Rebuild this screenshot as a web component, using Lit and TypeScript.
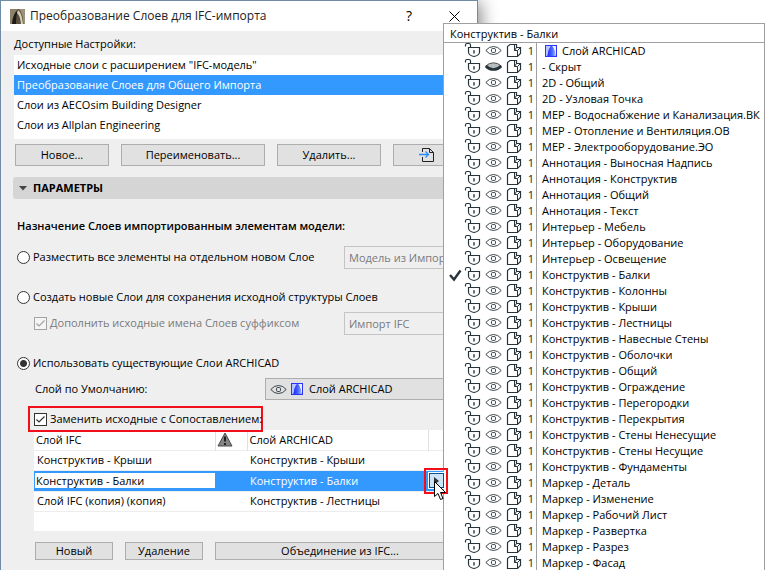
import { LitElement, html, css, svg, nothing } from "lit";
import { customElement, property, state } from "lit/decorators.js";
import { classMap } from "lit/directives/class-map.js";

const lockIcon = svg`<path d="M1.5 3.5V2Q1.5 .5 3 .5H5Q6.5 .5 6.5 2V4.5" /><path d="M4.5 4.5H15.5V9.5Q15 12.5 10 13.5Q5 12.5 4.5 9.5Z" /><path d="M10 7.2V10.4" stroke-width="1.4" />`;
const eyeIcon = svg`<path d="M.8 7.5Q4 3.5 8.5 3.5T16.2 7.5Q13 11.5 8.5 11.5T.8 7.5Z" stroke-width=".9" /><rect x="6.5" y="5.5" width="4" height="4" rx="1.2" stroke-width=".9" />`;
const eyeClosedIcon = svg`<path d="M.8 7Q4 3.8 8.5 3.8T16.2 7Q13 10.5 8.5 10.5T.8 7Z" fill="#b9bcbe" stroke-width=".8" /><path d="M.8 7Q4 10.5 8.5 10.5T16.2 7" stroke-width="2.6" />`;
const boxIcon = svg`<path d="M1.5 13.5V3.5L4 1.5H10.5V4.5H14.5V10.5L11.5 13.5Z" /><path d="M8.5 2V7.5H11.5V13.5M8.5 7.5L10.5 4.5M11.5 7.5L14 5" stroke-width="1" />`;

const LAYERS = [
  "Слой ARCHICAD", "- Скрыт", "2D - Общий", "2D - Узловая Точка",
  "МЕР - Водоснабжение и Канализация.ВК", "МЕР - Отопление и Вентиляция.ОВ", "МЕР - Электрооборудование.ЭО",
  "Аннотация - Выносная Надпись", "Аннотация - Конструктив", "Аннотация - Общий", "Аннотация - Текст",
  "Интерьер - Мебель", "Интерьер - Оборудование", "Интерьер - Освещение",
  "Конструктив - Балки", "Конструктив - Колонны", "Конструктив - Крыши", "Конструктив - Лестницы",
  "Конструктив - Навесные Стены", "Конструктив - Оболочки", "Конструктив - Общий", "Конструктив - Ограждение",
  "Конструктив - Перегородки", "Конструктив - Перекрытия", "Конструктив - Стены Ненесущие",
  "Конструктив - Стены Несущие", "Конструктив - Фундаменты",
  "Маркер - Деталь", "Маркер - Изменение", "Маркер - Рабочий Лист", "Маркер - Развертка", "Маркер - Разрез", "Маркер - Фасад",
];

const PRESETS = [
  'Исходные слои с расширением "IFC-модель"',
  "Преобразование Слоев для Общего Импорта",
  "Слои из AECOsim Building Designer",
  "Слои из Allplan Engineering",
];

@customElement("layer-logo")
export class LayerLogo extends LitElement {
  static styles = css`
    :host { display: block; width: 12px; height: 12px; }
    svg { display: block; }
  `;
  render() {
    return html`<svg width="12" height="12" viewBox="0 0 12 12" aria-hidden="true">
      <defs><linearGradient id="g" x2="1"><stop offset="0" stop-color="#1f2bff" /><stop offset=".6" stop-color="#4d6cff" /><stop offset="1" stop-color="#a9c0ff" /></linearGradient></defs>
      <rect width="12" height="12" fill="#2a35f5" />
      <path d="M1 11V1H6Q3.5 4 2.5 11Z" fill="#b8c4ff" />
      <path d="M7 1H11V11H10.5Q9.5 4 7 1Z" fill="#e6ecff" />
      <path d="M2.5 11Q3.5 3 6.5 1Q9.5 4 10.5 11Z" fill="url(#g)" />
    </svg>`;
  }
}

@customElement("layer-popup")
export class LayerPopup extends LitElement {
  @property() selected = "";
  static styles = css`
    :host { display: block; background: #fff; border: 1px solid #a0a0a3; border-bottom: 0; color: #000; font-size: 11px; line-height: 16px; box-sizing: border-box; }
    .title { padding: 2px 6px 0; height: 16px; border-bottom: 1px solid #a0a0a3; }
    ul { list-style: none; margin: 0; padding: 0; }
    li { display: grid; grid-template-columns: 20px 21px 21px 19px 11px 1fr; height: 16px; white-space: nowrap; cursor: default; }
    svg { display: block; fill: none; stroke: #27343c; stroke-width: 1.2; overflow: visible; }
    .check { stroke-width: 2.4; }
    .num { color: #10281c; text-align: right; padding-right: 2px; }
    .name { border-left: 1px solid #a0a0a3; padding-left: 5px; display: flex; align-items: center; gap: 5px; }
    .name layer-logo { margin-left: 3px; }
  `;
  render() {
    return html`<div class="title">${this.selected}</div>
      <ul role="listbox" aria-label="Слой">
        ${LAYERS.map((name, i) => html`<li role="option" aria-selected=${name === this.selected}>
          <span>${name === this.selected ? html`<svg class="check" width="20" height="16"><path d="M6 8L10 12.5L16.5 3.5" /></svg>` : nothing}</span>
          <svg width="17" height="16">${lockIcon}</svg>
          <svg width="17" height="16">${i === 1 ? eyeClosedIcon : eyeIcon}</svg>
          <svg width="17" height="16">${boxIcon}</svg>
          <span class="num">1</span>
          <span class="name">${i === 0 ? html`<layer-logo></layer-logo>` : nothing}${name}</span>
        </li>`)}
      </ul>`;
  }
}

@customElement("app-root")
export class AppRoot extends LitElement {
  @state() preset = 1;

  static styles = css`
    :host { display: block; position: relative; height: 100vh; overflow: hidden; background: #fff; font: 11px/16px "Open Sans", "Noto Sans", sans-serif; color: #000; }
    * { box-sizing: border-box; }
    button, input, select { font: inherit; color: inherit; margin: 0; }
    .dialog { width: calc(100% - 287px); min-height: 100%; background: #efefef; border: 1px solid #6e8ba8; border-bottom: 0; box-shadow: 3px 2px 16px #0007; }
    .titlebar { display: flex; align-items: center; height: 30px; padding: 0 13px 0 9px; background: #fff; gap: 5px; }
    .titlebar h1 { flex: 1; margin: 0; font-size: 12px; font-weight: 400; color: #222; }
    .titlebar button { width: 20px; height: 24px; padding: 0; border: 0; background: none; display: grid; place-items: center; font-size: 14px; }
    .titlebar .close { margin-left: 20px; }
    .body { padding: 5px 12px 0 12px; }
    .caption { padding-left: 1px; height: 19px; }
    .presets { list-style: none; margin: 0 0 0 1px; padding: 0 0 4px; background: #fff; }
    .presets li { height: 20px; line-height: 20px; padding-left: 3px; }
    .presets .on { background: #3399ff; color: #fff; }
    .row { display: flex; gap: 12px; }
    .btn { height: 22px; padding: 0; border: 1px solid #adadad; background: #e1e1e1; display: grid; place-items: center; }
    .actions { margin: 5px 0 11px 2px; }
    .w94 { width: 94px; } .w144 { width: 144px; } .w104 { width: 104px; } .w78 { width: 78px; } .w68 { width: 68px; }
    .grow { flex: 1; }
    .section { display: flex; align-items: center; gap: 6px; height: 22px; margin: 0; padding-left: 6px; font-size: 11px; font-weight: 700; background: #d5d5d5; border-radius: 3px; }
    .params { padding: 18px 0 0 4px; }
    .params h3 { margin: 0; font-size: 11px; font-weight: 600; line-height: 18px; }
    .line { display: grid; grid-template-columns: 327px 1fr; align-items: center; height: 24px; }
    .line.wide { grid-template-columns: 1fr; }
    .line label, .mark { display: flex; align-items: center; gap: 3px; white-space: nowrap; }
    .line .sub { padding-left: 17px; }
    .off { color: #7a7a7a; }
    .l1 { margin-top: 10px; } .l2 { margin-top: 16px; } .l3 { margin-top: 2px; } .l4 { margin-top: 16px; }
    input[type="radio"], input[type="checkbox"] { appearance: none; flex: none; width: 13px; height: 13px; background: #fff; border: 1px solid #333; }
    input[type="radio"] { border-radius: 50%; }
    input[type="radio"]:checked { background: radial-gradient(circle, #333 0 3px, #fff 4px); }
    input[type="checkbox"]:checked { background: #fff url('data:image/svg+xml,<svg xmlns="http://www.w3.org/2000/svg" viewBox="0 0 11 11"><path d="M1.5 5.5L4 8L9.5 2.5" fill="none" stroke="%23333" stroke-width="1.2"/></svg>'); }
    input[type="checkbox"]:disabled { opacity: .4; }
    .field { width: 100%; height: 23px; padding: 0 4px; border: 1px solid #c4c4c4; background: #efefef; color: #7a7a7a; border-radius: 0; }
    .default { display: grid; grid-template-columns: 230px 1fr; align-items: center; height: 22px; margin: 3px 0 6px 18px; }
    .pick { position: relative; }
    .pick select { width: 100%; height: 22px; appearance: none; padding: 0 0 0 43px; border: 1px solid #adadad; background: #e1e1e1; border-radius: 0; }
    .pick .icons { position: absolute; left: 5px; top: 4px; display: flex; gap: 4px; align-items: center; pointer-events: none; }
    .pick svg { fill: none; stroke: #27343c; }
    .mark { width: 235px; height: 26px; margin-left: 11px; padding-left: 4px; border: 2px solid #f0101a; position: relative; z-index: 1; }
    .map { width: calc(100% - 17px); margin: -2px 0 0 17px; table-layout: fixed; border-collapse: collapse; background: #fff; }
    .map th, .map td { height: 20px; padding: 0 0 0 3px; font-weight: 400; text-align: left; white-space: nowrap; border-top: 1px solid #ededed; }
    .map th { border: 0; border-right: 1px solid #e0e0e0; padding-left: 2px; }
    .map .cur td { background: #3399ff; color: #fff; }
    .map .cur input { display: block; width: 100%; height: 15px; border: 0; padding: 0 1px; background: #fff; color: #000; }
    .map .cur .edit { padding: 0 0 0 1px; }
    .map .c1 { width: 181px; } .map .c2 { width: 32px; } .map .c3 { width: 181px; }
    .map .warn { padding: 0 12px 0 0; } .map .warn svg { display: block; margin: auto; }
    .map .go { padding: 0; }
    .spot { position: relative; z-index: 3; display: grid; place-items: center; width: 24px; height: 26px; margin: -3px 0 -3px -4px; border: 2px solid #f0101a; }
    .spot button { width: 15px; height: 15px; padding: 0; background: #cce4f7; border: 1px solid #005499; outline: 1px solid #fff; display: grid; place-items: center; }
    .cursor { position: absolute; left: 8px; top: 11px; z-index: 4; }
    .foot { margin: 11px 0 0 18px; }
    .foot .btn { height: 18px; }
    layer-popup { position: absolute; z-index: 2; top: 23px; right: 0; width: 322px; }
  `;

  render() {
    return html`
      <main class="dialog">
        <header class="titlebar">
          <svg width="15" height="15" viewBox="0 0 15 15" aria-hidden="true"><rect width="15" height="15" fill="#5a5040" /><path d="M0 15V0H8Q3 5 2 15Z" fill="#8c8269" /><path d="M2 15Q3 4 8 1Q6 6 6 15Z" fill="#1c1a16" /><path d="M8 1Q12 4 13 15H11Q10 6 7 4Z" fill="#d8d0b4" /><path d="M9 0H15V15H13.5Q13 4 9 0Z" fill="#9d927a" /></svg>
          <h1>Преобразование Слоев для IFC-импорта</h1>
          <button aria-label="Справка">?</button>
          <button class="close" aria-label="Закрыть"><svg width="11" height="11" stroke="#000" fill="none"><path d="M.5 .5L10.5 10.5M10.5 .5L.5 10.5" /></svg></button>
        </header>
        <div class="body">
          <div class="caption">Доступные Настройки:</div>
          <ul class="presets" role="listbox" aria-label="Доступные Настройки">
            ${PRESETS.map((p, i) => html`<li role="option" aria-selected=${i === this.preset} class=${classMap({ on: i === this.preset })} @click=${() => (this.preset = i)}>${p}</li>`)}
          </ul>
          <div class="row actions">
            <button class="btn w94">Новое...</button>
            <button class="btn w144">Переименовать...</button>
            <button class="btn w104">Удалить...</button>
            <button class="btn w68" aria-label="Импорт"><svg width="16" height="16" fill="none"><path d="M3.5 5V1.5H10.5L14.5 5.5V14.5H3.5V10M10.5 1.5V5.5H14.5" stroke="#222" fill="none" /><path d="M0 7.5H9.5M6.5 4.5L9.5 7.5L6.5 10.5" stroke="#2b8cff" stroke-width="1.3" /></svg></button>
          </div>
          <h2 class="section"><svg width="8" height="5"><path d="M0 0H8L4 4.5Z" fill="#444" /></svg>ПАРАМЕТРЫ</h2>
          <div class="params">
            <h3>Назначение Слоев импортированным элементам модели:</h3>
            <div class="line l1"><label><input type="radio" name="m" />Разместить все элементы на отдельном новом Слое</label><input class="field" aria-label="Имя Слоя" value="Модель из Импорта" disabled /></div>
            <div class="line wide l2"><label><input type="radio" name="m" />Создать новые Слои для сохранения исходной структуры Слоев</label></div>
            <div class="line l3"><label class="sub off"><input type="checkbox" checked disabled />Дополнить исходные имена Слоев суффиксом</label><input class="field" aria-label="Суффикс" value="Импорт IFC" disabled /></div>
            <div class="line l4"><label><input type="radio" name="m" checked />Использовать существующие Слои ARCHICAD</label></div>
            <div class="default"><label for="def">Слой по Умолчанию:</label>
              <div class="pick"><select id="def"><option>Слой ARCHICAD</option></select><span class="icons"><svg width="17" height="14">${eyeIcon}</svg><layer-logo></layer-logo></span></div></div>
            <label class="mark"><input type="checkbox" checked />Заменить исходные с Сопоставлением:</label>
            <table class="map">
              <thead><tr><th class="c1">Слой IFC</th><th class="c2 warn"><svg width="16" height="15" aria-label="Внимание"><path d="M8 1L15 14H1Z" fill="#858585" stroke="#4a4a4a" /><path d="M8 4.5V9.5M8 11V13" stroke="#222" stroke-width="2" /></svg></th><th class="c3">Слой ARCHICAD</th><th></th></tr></thead>
              <tbody>
                <tr><td>Конструктив - Крыши</td><td></td><td>Конструктив - Крыши</td><td></td></tr>
                <tr class="cur"><td class="edit"><input aria-label="Слой IFC" value="Конструктив - Балки" /></td><td></td><td>Конструктив - Балки</td>
                  <td class="go"><div class="spot"><button aria-label="Выбрать Слой"><svg width="5" height="8"><path d="M0 0L5 4L0 8Z" fill="#333" /></svg></button>
                    <svg class="cursor" width="13" height="20"><path d="M.5 .5V15.5L4 12.5L6.5 18.5L9 17.5L6.5 11.5H11.5Z" fill="#fff" stroke="#000" /></svg></div></td></tr>
                <tr><td>Слой IFC (копия) (копия)</td><td></td><td>Конструктив - Лестницы</td><td></td></tr>
                <tr><td></td><td></td><td></td><td></td></tr>
              </tbody>
            </table>
            <div class="row foot"><button class="btn w78">Новый</button><button class="btn w78">Удаление</button><button class="btn grow">Объединение из IFC...</button></div>
          </div>
        </div>
      </main>
      <layer-popup selected="Конструктив - Балки"></layer-popup>`;
  }
}
